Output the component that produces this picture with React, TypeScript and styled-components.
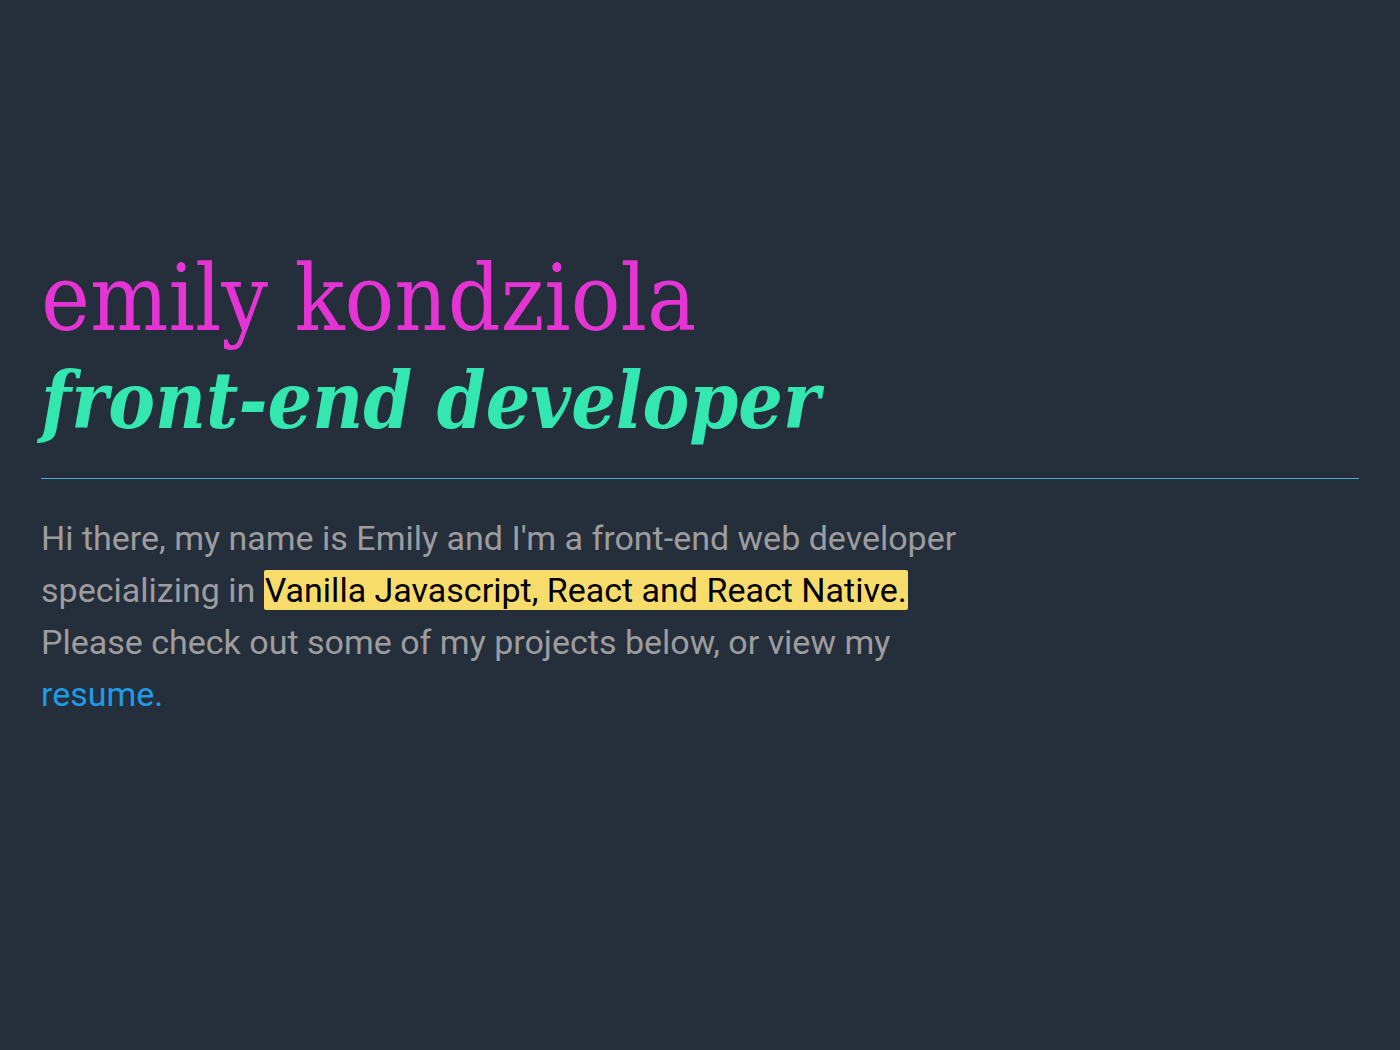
import React from "react";
import styled, { createGlobalStyle } from "styled-components";

const Global = createGlobalStyle`
  html, body { margin: 0; padding: 0; background: #252e3b; }
  body { min-height: 1050px; }
`;

const Page = styled.main`
  box-sizing: border-box;
  min-height: 1050px;
  padding: 248px 41px 0;
  background: #252e3b;
`;

const Header = styled.header`
  display: flex;
  flex-direction: column;
  padding-bottom: 26px;
  border-bottom: 1px solid #52a4d8;
`;

const Name = styled.h1`
  margin: 0;
  font-family: "DejaVu Serif", serif;
  font-stretch: condensed;
  font-weight: 400;
  font-size: 92px;
  line-height: 102px;
  color: #e434d4;
`;

const Role = styled.h2`
  margin: 0;
  font-family: "DejaVu Serif", serif;
  font-stretch: condensed;
  font-style: italic;
  font-weight: 700;
  font-size: 78px;
  line-height: 102px;
  color: #34e6b0;
`;

const Intro = styled.p`
  max-width: 970px;
  margin: 33px 0 0;
  font-family: Roboto, "Liberation Sans", sans-serif;
  font-size: 34px;
  line-height: 52px;
  color: #9d9d9f;
`;

const Mark = styled.mark`
  background: #f8dc6b;
  color: #000;
  border-radius: 2px;
  padding: 0 1px;
`;

const Link = styled.a`
  color: #1e9ce8;
  text-decoration: none;
`;

export default function App() {
  return (
    <>
      <Global />
      <Page>
        <Header>
          <Name>emily kondziola</Name>
          <Role>front-end developer</Role>
        </Header>
        <Intro>
          Hi there, my name is Emily and I'm a front-end web developer specializing in{" "}
          <Mark>Vanilla Javascript, React and React Native.</Mark> Please check out some of my
          projects below, or view my <Link href="#">resume.</Link>
        </Intro>
      </Page>
    </>
  );
}
